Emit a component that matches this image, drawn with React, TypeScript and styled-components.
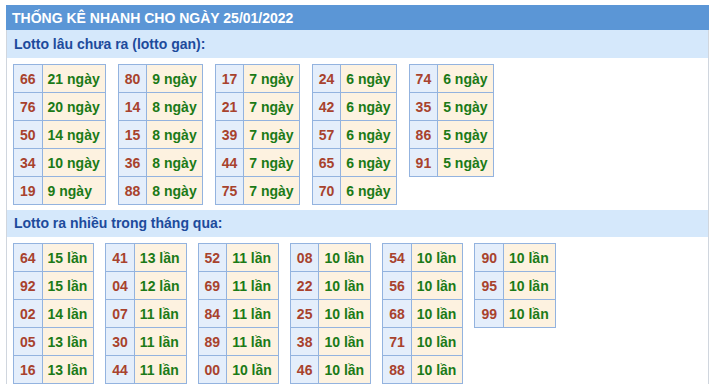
import React from "react";
import styled, { createGlobalStyle } from "styled-components";

const Global = createGlobalStyle`
  html, body { margin: 0; padding: 0; background: #ffffff; }
  body { font-family: "Liberation Sans", Arial, sans-serif; }
`;

const Panel = styled.div`
  margin: 5px 0 0 6px;
  width: 703px;
  box-sizing: border-box;
  border: 1px solid #d0d6de;
  border-top: none;
  height: 390px;
`;

const Header = styled.div`
  margin: 0 -1px;
  height: 25px;
  line-height: 26px;
  padding-left: 6px;
  background: #5b96d6;
  color: #ffffff;
  font-weight: bold;
  font-size: 14px;
`;

const SubHeader = styled.div<{ $h: number }>`
  height: ${(p) => p.$h}px;
  line-height: ${(p) => p.$h}px;
  padding-left: 7px;
  background: #d5e8fb;
  color: #1d4b9c;
  font-weight: bold;
  font-size: 14px;
`;

const TableRow = styled.div<{ $gap: number; $mb: number }>`
  display: flex;
  align-items: flex-start;
  gap: ${(p) => p.$gap}px;
  padding: 6px 6px 0;
  margin-bottom: ${(p) => p.$mb}px;
`;

const Table = styled.table`
  border-collapse: collapse;
  font-size: 14px;
  font-weight: bold;
`;

const NumCell = styled.td`
  height: 27px;
  padding: 0 6px;
  border: 1px solid #93b3df;
  background: #e4eefb;
  color: #a8422d;
  text-align: center;
`;

const ValCell = styled.td<{ $padR: number }>`
  height: 27px;
  padding: 0 ${(p) => p.$padR}px 0 5px;
  border: 1px solid #93b3df;
  background: #fdf2e0;
  color: #1b7a17;
  text-align: left;
  white-space: nowrap;
`;

type Entry = [string, string];

const gan: Entry[][] = [
  [["66", "21"], ["76", "20"], ["50", "14"], ["34", "10"], ["19", "9"]],
  [["80", "9"], ["14", "8"], ["15", "8"], ["36", "8"], ["88", "8"]],
  [["17", "7"], ["21", "7"], ["39", "7"], ["44", "7"], ["75", "7"]],
  [["24", "6"], ["42", "6"], ["57", "6"], ["65", "6"], ["70", "6"]],
  [["74", "6"], ["35", "5"], ["86", "5"], ["91", "5"]],
];

const nhieu: Entry[][] = [
  [["64", "15"], ["92", "15"], ["02", "14"], ["05", "13"], ["16", "13"]],
  [["41", "13"], ["04", "12"], ["07", "11"], ["30", "11"], ["44", "11"]],
  [["52", "11"], ["69", "11"], ["84", "11"], ["89", "11"], ["00", "10"]],
  [["08", "10"], ["22", "10"], ["25", "10"], ["38", "10"], ["46", "10"]],
  [["54", "10"], ["56", "10"], ["68", "10"], ["71", "10"], ["88", "10"]],
  [["90", "10"], ["95", "10"], ["99", "10"]],
];

function StatTable({ rows, unit, padR }: { rows: Entry[]; unit: string; padR: number }) {
  return (
    <Table>
      <tbody>
        {rows.map(([n, v], i) => (
          <tr key={i}>
            <NumCell>{n}</NumCell>
            <ValCell $padR={padR}>
              {v} {unit}
            </ValCell>
          </tr>
        ))}
      </tbody>
    </Table>
  );
}

export default function App() {
  return (
    <>
      <Global />
      <Panel>
        <Header>THỐNG KÊ NHANH CHO NGÀY 25/01/2022</Header>
        <SubHeader $h={28}>Lotto lâu chưa ra (lotto gan):</SubHeader>
        <TableRow $gap={12} $mb={5}>
          {gan.map((t, i) => (
            <StatTable key={i} rows={t} unit="ngày" padR={5} />
          ))}
        </TableRow>
        <SubHeader $h={27}>Lotto ra nhiều trong tháng qua:</SubHeader>
        <TableRow $gap={11} $mb={0}>
          {nhieu.map((t, i) => (
            <StatTable key={i} rows={t} unit="lần" padR={6} />
          ))}
        </TableRow>
      </Panel>
    </>
  );
}
